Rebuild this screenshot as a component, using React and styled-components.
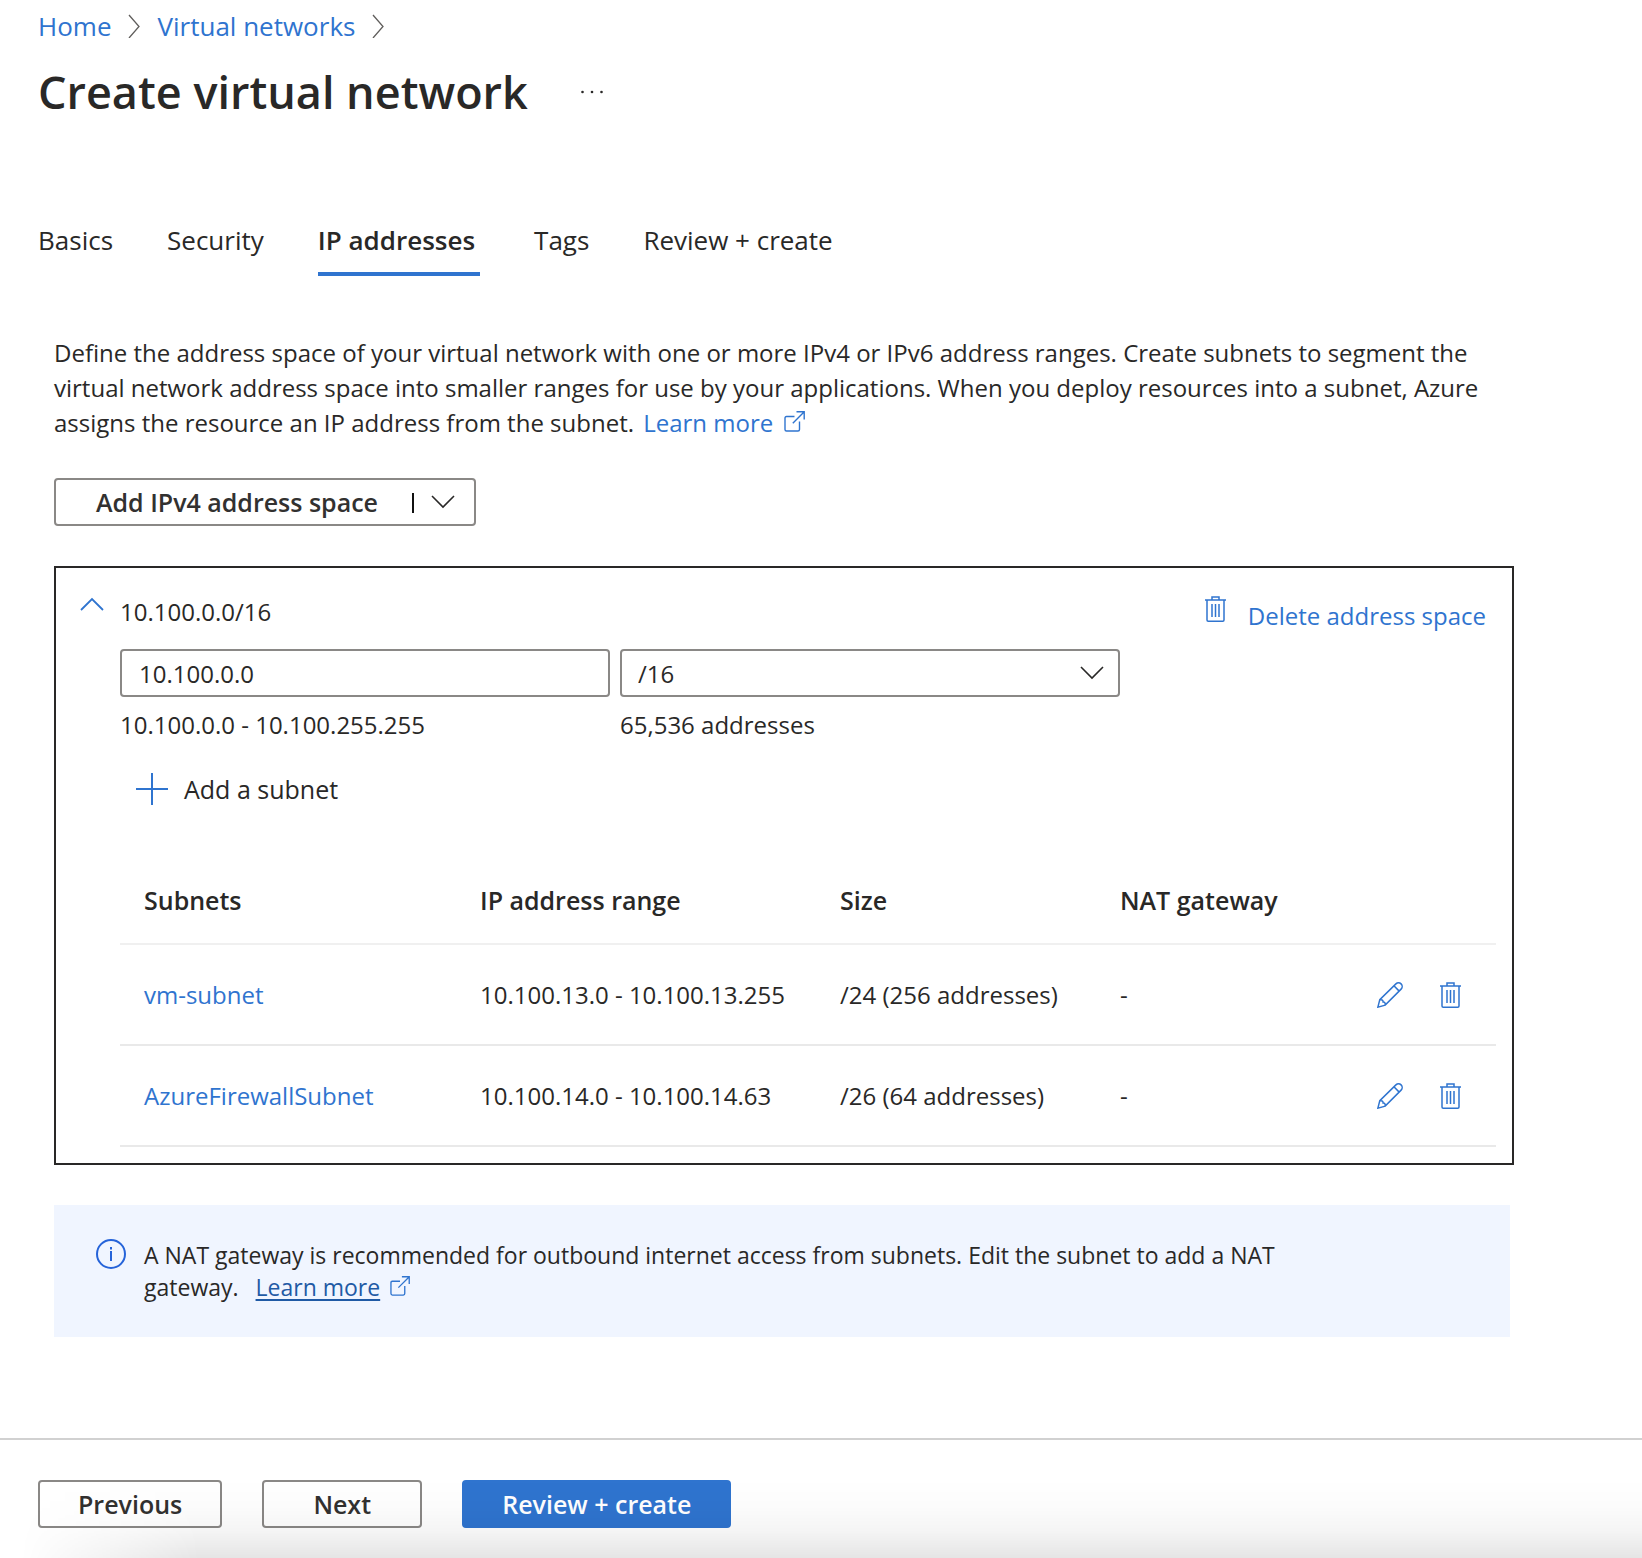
import React, { useState } from 'react';
import styled, { createGlobalStyle } from 'styled-components';

const blue = '#2f74cf';
const ink = '#292827';
const line = '#8a8886';

const GlobalStyle = createGlobalStyle`
  *, *::before, *::after { box-sizing: border-box; }
  html, body { margin: 0; background: #fff; }
  body, button, input, select {
    font-family: "Segoe UI", "Open Sans", "Noto Sans", sans-serif;
    font-size: 24px;
    color: ${ink};
  }
  h1, p { margin: 0; }
  svg { display: block; flex: none; }
`;

const Page = styled.div`
  min-height: 100vh;
  display: flex;
  flex-direction: column;
`;

const Link = styled.a`
  color: ${blue};
  text-decoration: none;
`;

const PlainButton = styled.button`
  display: inline-flex;
  align-items: center;
  padding: 0;
  border: 0;
  background: none;
  cursor: pointer;
`;

const Header = styled.header`
  padding: 6px 38px 0;
`;

const Breadcrumb = styled.nav`
  display: flex;
  align-items: center;
  gap: 17px;
  line-height: 40px;
  font-size: 26px;
`;

const TitleRow = styled.div`
  display: flex;
  align-items: center;
  gap: 52px;
  margin-top: 14px;
`;

const Title = styled.h1`
  font-size: 45px;
  line-height: 64px;
  font-weight: 600;
`;

const Tabs = styled.nav`
  display: flex;
  gap: 54px;
  padding: 90px 38px 0;
`;

const Tab = styled.button`
  height: 62px;
  padding: 0 ${(p) => (p.$active ? 5 : 0)}px 6px 0;
  border: 0;
  border-bottom: 4px solid ${(p) => (p.$active ? blue : 'transparent')};
  background: none;
  font-size: 26px;
  font-weight: ${(p) => (p.$active ? 600 : 400)};
  line-height: 40px;
  cursor: pointer;
`;

const Main = styled.main`
  flex: 1;
  padding: 59px 128px 32px 54px;
`;

const Intro = styled.p`
  line-height: 35px;
`;

const IconLink = styled(Link)`
  margin-left: 3px;
  white-space: nowrap;
  svg { display: inline-block; margin-left: 4px; }
`;

const Button = styled.button`
  display: inline-flex;
  align-items: center;
  justify-content: center;
  min-width: 160px;
  height: 48px;
  padding: 0 38px;
  border: 2px solid ${(p) => (p.$primary ? blue : line)};
  border-radius: 4px;
  background: ${(p) => (p.$primary ? blue : '#fff')};
  color: ${(p) => (p.$primary ? '#fff' : '#323130')};
  font-size: 25px;
  font-weight: 600;
  cursor: pointer;
`;

const AddressSpaceButton = styled(Button)`
  margin-top: 38px;
  padding: 0 19px 0 40px;
`;

const Divider = styled.span`
  width: 2px;
  height: 20px;
  margin: 2px 17px 0 34px;
  background: #111;
`;

const Panel = styled.section`
  display: grid;
  grid-template-columns: 64px 1fr;
  margin-top: 40px;
  padding: 24px 16px 16px 0;
  border: 2px solid ${ink};
`;

const Collapse = styled(PlainButton)`
  align-self: start;
  justify-content: flex-end;
  height: 24px;
  padding-right: 16px;
`;

const PanelHead = styled.div`
  display: flex;
  justify-content: space-between;
  align-items: flex-start;
  line-height: 40px;
  min-height: 57px;
`;

const DeleteSpace = styled(PlainButton)`
  gap: 22px;
  align-items: flex-start;
  padding: 4px 10px 0 0;
  color: ${blue};
  line-height: 40px;
`;

const Fields = styled.div`
  display: grid;
  grid-template-columns: 490px 500px;
  column-gap: 10px;
`;

const Field = styled.div`
  display: grid;
  row-gap: 8px;
  line-height: 40px;
`;

const TextBox = styled.input`
  width: 100%;
  height: 48px;
  padding: 0 17px;
  border: 2px solid ${line};
  border-radius: 4px;
  background: #fff;
`;

const SelectWrap = styled.div`
  display: grid;
  align-items: center;
  > * { grid-area: 1 / 1; }
  svg { justify-self: end; margin-right: 16px; pointer-events: none; }
`;

const Select = styled.select`
  width: 100%;
  height: 48px;
  padding: 0 16px;
  appearance: none;
  border: 2px solid ${line};
  border-radius: 4px;
  background: #fff;
`;

const AddSubnet = styled(PlainButton)`
  gap: 16px;
  margin: 24px 0 0 16px;
  font-size: 25px;
  line-height: 40px;
`;

const Table = styled.table`
  width: 100%;
  margin-top: 44px;
  border-collapse: collapse;
  table-layout: fixed;
`;

const Th = styled.th`
  width: ${(p) => p.$width || 'auto'};
  height: 88px;
  padding: 0 0 0 24px;
  border-bottom: 2px solid #f0f0f0;
  font-size: 25px;
  font-weight: 600;
  text-align: left;
`;

const Td = styled.td`
  height: 101px;
  padding: 0 0 0 24px;
  border-bottom: 2px solid #e9e9e9;
  white-space: nowrap;
`;

const Actions = styled.div`
  display: flex;
  justify-content: flex-end;
  gap: 37px;
  padding-right: 35px;
`;

const Info = styled.aside`
  display: flex;
  align-items: flex-start;
  gap: 18px;
  margin: 40px 4px 0 0;
  padding: 34px 180px 34px 42px;
  background: #f0f5ff;
  font-size: 23px;
  line-height: 32px;
`;

const InfoText = styled.p`
  a { margin-left: 11px; color: #1f5aa5; text-decoration: underline; text-underline-offset: 3px; text-decoration-thickness: 2px; }
  svg { display: inline-block; margin-left: 10px; }
`;

const Footer = styled.footer`
  position: relative;
  display: flex;
  gap: 40px;
  padding: 40px 38px 30px;
  border-top: 2px solid #d1d1d1;
  &::after {
    content: "";
    position: absolute;
    inset: auto 0 0 0;
    height: 80px;
    pointer-events: none;
    background: linear-gradient(to bottom, rgba(0,0,0,0) 0%, rgba(0,0,0,.012) 35%, rgba(0,0,0,.04) 65%, rgba(0,0,0,.1) 100%);
    mask-image: linear-gradient(to right, transparent 20px, #000 200px);
  }
`;

const Icon = ({ w, h, color = blue, sw = 2, children, ...rest }) => (
  <svg width={w} height={h} viewBox={`0 0 ${w} ${h}`} fill="none" stroke={color} strokeWidth={sw} aria-hidden="true" {...rest}>
    {children}
  </svg>
);

const Crumb = () => (
  <Icon w={12} h={24} color="#605e5c" sw={1.3}><path d="M1 1 11 12.5 1 24" /></Icon>
);
const ChevronDown = () => (
  <Icon w={24} h={14} color={ink} sw={1.6}><path d="M1 1 12 12 23 1" /></Icon>
);
const ChevronUp = () => (
  <Icon w={24} h={14} sw={1.8}><path d="M1 13 12 2 23 13" /></Icon>
);
const Plus = () => (
  <Icon w={32} h={32}><path d="M16 0V32M0 16H32" /></Icon>
);
const Trash = () => (
  <Icon w={21} h={26} sw={1.5}>
    <path d="M0 4H21M7 4V1H14V4M2 4V24Q2 25.2 3.2 25.2H17.8Q19 25.2 19 24V4M7 8V21M10.5 8V21M14 8V21" />
  </Icon>
);
const Pencil = () => (
  <Icon w={26} h={26} sw={1.5}>
    <path d="M.9 25.1 2.8 17.6 18.9 1.9A3.6 3.6 0 0 1 24.1 7.1L8.2 23.1ZM16.9 3.8 22.2 9.1M2.8 17.6Q6.3 17.6 6.1 20Q8.4 19.8 8.2 23.1" />
  </Icon>
);
const External = ({ size = 21 }) => (
  <svg width={size} height={size} viewBox="0 0 21 21" fill="none" stroke={blue} strokeWidth="1.4" aria-hidden="true">
    <path d="M10.5 5.5H2.5Q1 5.5 1 7V18.5Q1 20 2.5 20H14Q15.5 20 15.5 18.5V10.5M12.5 .8H20.2V8.5M20 1 8.8 12.2" />
  </svg>
);
const InfoIcon = () => (
  <Icon w={30} h={30} color="#2563d9">
    <circle cx="15" cy="15" r="14" />
    <path d="M15 12V22M15 8V10.4" />
  </Icon>
);
const Dots = () => (
  <svg width="24" height="4" viewBox="0 0 24 4" fill={ink} aria-hidden="true">
    <circle cx="2.5" cy="2" r="1.3" /><circle cx="12" cy="2" r="1.3" /><circle cx="21.5" cy="2" r="1.3" />
  </svg>
);

const tabs = ['Basics', 'Security', 'IP addresses', 'Tags', 'Review + create'];
const subnets = [
  { name: 'vm-subnet', range: '10.100.13.0 - 10.100.13.255', size: '/24 (256 addresses)', nat: '-' },
  { name: 'AzureFirewallSubnet', range: '10.100.14.0 - 10.100.14.63', size: '/26 (64 addresses)', nat: '-' },
];

export default function App() {
  const [tab, setTab] = useState('IP addresses');
  return (
    <Page>
      <GlobalStyle />
      <Header>
        <Breadcrumb aria-label="Breadcrumb">
          <Link href="#home">Home</Link>
          <Crumb />
          <Link href="#networks">Virtual networks</Link>
          <Crumb />
        </Breadcrumb>
        <TitleRow>
          <Title>Create virtual network</Title>
          <PlainButton aria-label="More options"><Dots /></PlainButton>
        </TitleRow>
      </Header>
      <Tabs>
        {tabs.map((t) => (
          <Tab key={t} $active={t === tab} onClick={() => setTab(t)}>{t}</Tab>
        ))}
      </Tabs>
      <Main>
        <Intro>
          Define the address space of your virtual network with one or more IPv4 or IPv6 address ranges. Create subnets to
          segment the virtual network address space into smaller ranges for use by your applications. When you deploy
          resources into a subnet, Azure assigns the resource an IP address from the subnet.{' '}
          <IconLink href="#learn">Learn more <External /></IconLink>
        </Intro>
        <AddressSpaceButton>
          Add IPv4 address space
          <Divider />
          <ChevronDown />
        </AddressSpaceButton>
        <Panel>
          <Collapse aria-label="Collapse address space"><ChevronUp /></Collapse>
          <div>
            <PanelHead>
              <span>10.100.0.0/16</span>
              <DeleteSpace><Trash />Delete address space</DeleteSpace>
            </PanelHead>
            <Fields>
              <Field>
                <TextBox aria-label="Starting address" defaultValue="10.100.0.0" />
                <span>10.100.0.0 - 10.100.255.255</span>
              </Field>
              <Field>
                <SelectWrap>
                  <Select aria-label="Address space size" defaultValue="/16">
                    <option>/16</option>
                    <option>/24</option>
                  </Select>
                  <ChevronDown />
                </SelectWrap>
                <span>65,536 addresses</span>
              </Field>
            </Fields>
            <AddSubnet><Plus />Add a subnet</AddSubnet>
            <Table>
              <thead>
                <tr>
                  <Th $width="336px">Subnets</Th>
                  <Th $width="360px">IP address range</Th>
                  <Th $width="280px">Size</Th>
                  <Th>NAT gateway</Th>
                  <Th $width="160px" aria-label="Actions" />
                </tr>
              </thead>
              <tbody>
                {subnets.map((s) => (
                  <tr key={s.name}>
                    <Td><Link href={`#${s.name}`}>{s.name}</Link></Td>
                    <Td>{s.range}</Td>
                    <Td>{s.size}</Td>
                    <Td>{s.nat}</Td>
                    <Td>
                      <Actions>
                        <PlainButton aria-label={`Edit ${s.name}`}><Pencil /></PlainButton>
                        <PlainButton aria-label={`Delete ${s.name}`}><Trash /></PlainButton>
                      </Actions>
                    </Td>
                  </tr>
                ))}
              </tbody>
            </Table>
          </div>
        </Panel>
        <Info>
          <InfoIcon />
          <InfoText>
            A NAT gateway is recommended for outbound internet access from subnets. Edit the subnet to add a NAT gateway.{' '}
            <a href="#nat">Learn more</a><External size={20} />
          </InfoText>
        </Info>
      </Main>
      <Footer>
        <Button>Previous</Button>
        <Button>Next</Button>
        <Button $primary>Review + create</Button>
      </Footer>
    </Page>
  );
}
